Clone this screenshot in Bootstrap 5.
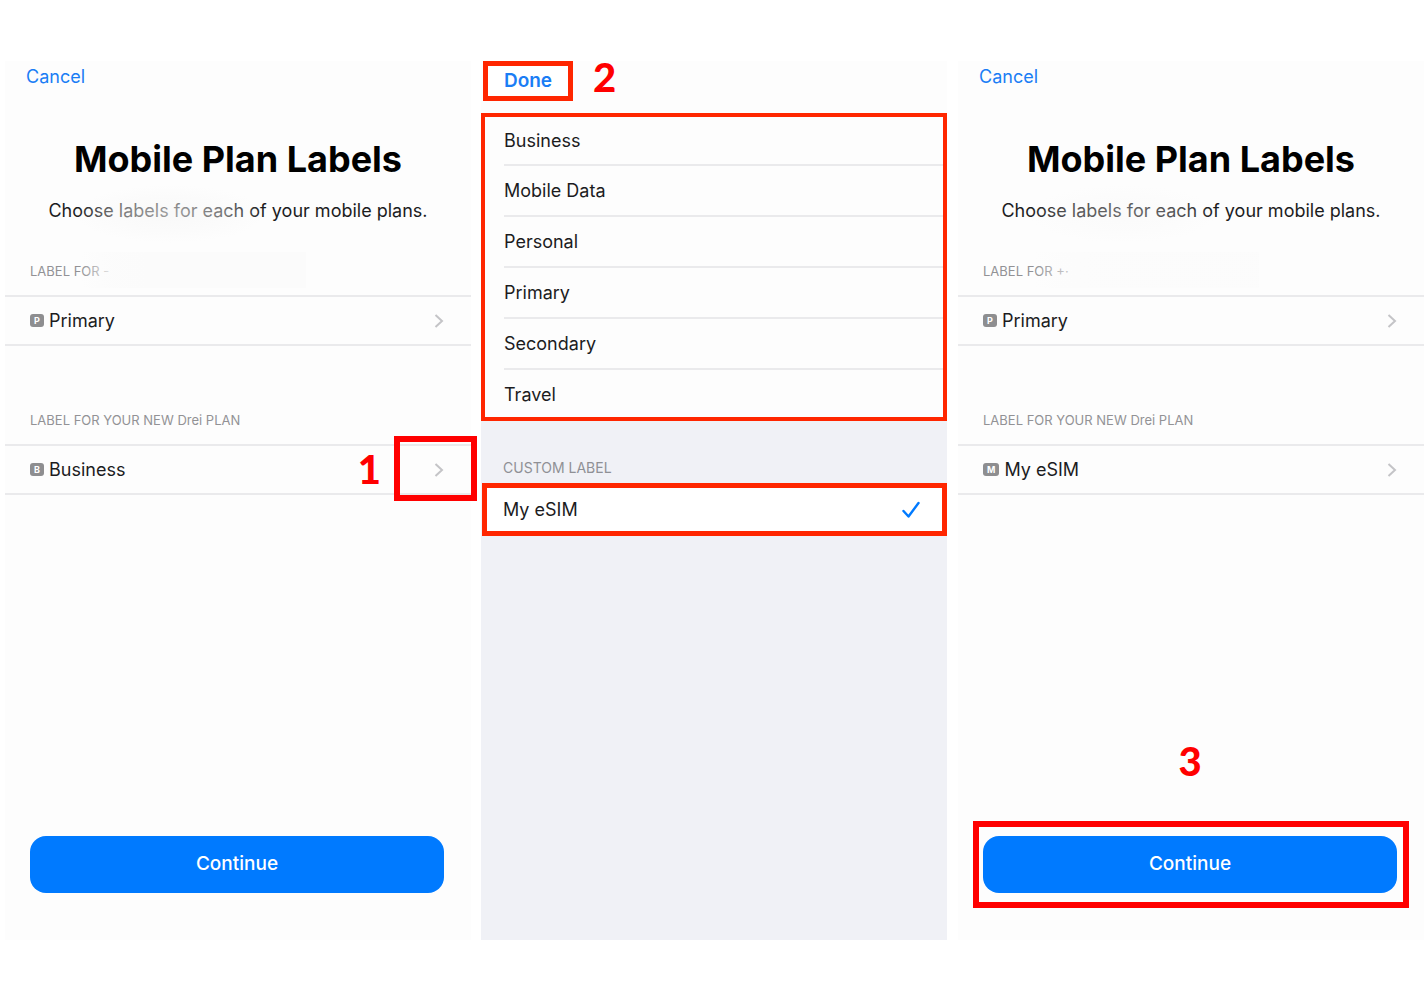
<!DOCTYPE html>
<html lang="en">
<head>
<meta charset="utf-8">
<meta name="viewport" content="width=device-width, initial-scale=1">
<title>Mobile Plan Labels</title>
<link href="https://cdn.jsdelivr.net/npm/bootstrap@5.3.0/dist/css/bootstrap.min.css" rel="stylesheet">
<style>
  body { font-family: Inter, "Liberation Sans", sans-serif; font-size: 18px; line-height: 24px; color: #1c1c1e; background: #fff; }
  .steps { padding: 61px 4px 62px 5px; }
  .phone { flex: 1 1 0; min-width: 0; background: #fdfdfd; }
  .phone-picker { margin: 0 11px 0 10px; background: #f0f1f6; }
  .text-action { color: #1a7df5; text-decoration: none; }
  .cancel-bar { padding: 4px 21px 0; }
  .plan-title { font-size: 36px; line-height: 44px; font-weight: 700; color: #000; margin: 48px 0 18px; }
  .plan-intro { margin: 0; }
  .group-label { font-size: 13px; line-height: 16px; color: #929295; margin: 0; padding: 0 25px; }
  .first-group { margin-top: 40px; }
  .second-group { margin-top: 66px; }
  .plan-row { height: 51px; margin-top: 16px; padding: 0 27px 0 25px; color: #1c1c1e; text-decoration: none; border-top: 2px solid #eaeaec; border-bottom: 2px solid #eaeaec; }
  .plan-tag { min-width: 14px; height: 13px; padding: 0 4px; border-radius: 3px; background: #8e8e90; color: #fff; font-size: 9px; line-height: 13px; font-weight: 700; text-align: center; margin-right: 5px; }
  .continue-btn { height: 57px; border-radius: 16px; background: #007aff; color: #fff; font-size: 19px; font-weight: 500; }
  .continue-btn:hover { background: #006be0; color: #fff; }
  .continue-area { padding: 0 27px 47px 25px; }
  .step-number { font-family: Lato, sans-serif; font-size: 40px; line-height: 32px; font-weight: 900; color: #f00; }
  .ring-1 { top: -10px; right: -6px; width: 83px; height: 65px; border: 6px solid #f00; }
  .number-1 { right: 90px; top: 7px; }
  .ring-3 { inset: -15px -12px -15px -10px; border: 6px solid #f00; pointer-events: none; }
  .number-3 { left: 0; right: 0; top: -91px; }
  .smudge-soft { left: 70px; top: 124px; width: 190px; height: 58px; background: radial-gradient(closest-side, rgba(246,246,246,.6), rgba(248,248,248,.4) 60%, rgba(253,253,253,0)); }
  .smudge-flat { left: 76px; top: 191px; width: 225px; height: 36px; background: linear-gradient(90deg, rgba(251,251,251,0), rgba(251,251,251,.7) 12%, #fbfbfb 30%); }
  .smudge-light { opacity: .6; }
  .picker-bar { height: 52px; background: #fdfdfd; }
  .done-btn { width: 90px; height: 40px; margin-left: 2px; background: #fff; border: 5px solid #ff2600; font-size: 19px; font-weight: 600; }
  .option-list { border: 4px solid #ff2600; border-radius: 0; background: #fdfdfd; padding-left: 19px; }
  .option-row { height: 51px; padding: 0; border: 0; border-bottom: 2px solid #eaeaec; background: transparent; color: #1c1c1e; text-align: left; }
  .option-row:first-child { height: 49px; }
  .option-row:last-child { height: 47px; padding-top: 3px; border-bottom: 0; }
  .custom-label { font-size: 14px; line-height: 18px; color: #8f9095; margin: 38px 0 6px; padding: 0 22px; }
  .custom-row { height: 53px; margin-left: 1px; padding: 0 22px 0 16px; border: 5px solid #ff2600; background: #fff; color: #1c1c1e; }
</style>
</head>
<body>
<main class="steps d-flex min-vh-100">
  <section class="phone d-flex flex-column position-relative">
    <div class="cancel-bar"><a class="text-action" href="#">Cancel</a></div>
    <h1 class="plan-title text-center">Mobile Plan Labels</h1>
    <p class="plan-intro text-center">Choose labels for each of your mobile plans.</p>
    <p class="group-label first-group">LABEL FOR -</p>
    <a class="plan-row d-flex align-items-center" href="#">
      <span class="plan-tag">P</span><span>Primary</span>
      <svg class="ms-auto" width="10" height="16" viewBox="0 0 10 16" fill="none" stroke="#c4c4c7" stroke-width="2" aria-hidden="true"><path d="M1.500 2 8 8 1.500 14"/></svg>
    </a>
    <p class="group-label second-group">LABEL FOR YOUR NEW Drei PLAN</p>
    <a class="plan-row d-flex align-items-center position-relative" href="#">
      <span class="plan-tag">B</span><span>Business</span>
      <svg class="ms-auto" width="10" height="16" viewBox="0 0 10 16" fill="none" stroke="#c4c4c7" stroke-width="2" aria-hidden="true"><path d="M1.500 2 8 8 1.500 14"/></svg>
      <span class="step-number number-1 position-absolute">1</span>
      <span class="ring-1 position-absolute"></span>
    </a>
    <div class="continue-area mt-auto"><button type="button" class="btn continue-btn w-100 border-0">Continue</button></div>
    <span class="smudge-soft position-absolute"></span>
    <span class="smudge-flat position-absolute"></span>
  </section>

  <section class="phone phone-picker">
    <div class="picker-bar d-flex align-items-start">
      <button type="button" class="done-btn text-action p-0">Done</button>
      <span class="step-number ms-3 ps-1">2</span>
    </div>
    <div class="option-list list-group">
      <button type="button" class="option-row">Business</button>
      <button type="button" class="option-row">Mobile Data</button>
      <button type="button" class="option-row">Personal</button>
      <button type="button" class="option-row">Primary</button>
      <button type="button" class="option-row">Secondary</button>
      <button type="button" class="option-row">Travel</button>
    </div>
    <h2 class="custom-label fw-normal">CUSTOM LABEL</h2>
    <div class="d-flex">
      <button type="button" class="custom-row d-flex flex-fill align-items-center justify-content-between">
        <span>My eSIM</span>
        <svg width="18" height="18" viewBox="0 0 18 18" fill="none" stroke="#007aff" stroke-width="2.400" stroke-linecap="round" stroke-linejoin="round" aria-hidden="true"><path d="M1.500 10 6.500 15.500 16.500 2"/></svg>
      </button>
    </div>
  </section>

  <section class="phone d-flex flex-column position-relative">
    <div class="cancel-bar"><a class="text-action" href="#">Cancel</a></div>
    <h1 class="plan-title text-center">Mobile Plan Labels</h1>
    <p class="plan-intro text-center">Choose labels for each of your mobile plans.</p>
    <p class="group-label first-group">LABEL FOR +·</p>
    <a class="plan-row d-flex align-items-center" href="#">
      <span class="plan-tag">P</span><span>Primary</span>
      <svg class="ms-auto" width="10" height="16" viewBox="0 0 10 16" fill="none" stroke="#c4c4c7" stroke-width="2" aria-hidden="true"><path d="M1.500 2 8 8 1.500 14"/></svg>
    </a>
    <p class="group-label second-group">LABEL FOR YOUR NEW Drei PLAN</p>
    <a class="plan-row d-flex align-items-center" href="#">
      <span class="plan-tag">M</span><span>My eSIM</span>
      <svg class="ms-auto" width="10" height="16" viewBox="0 0 10 16" fill="none" stroke="#c4c4c7" stroke-width="2" aria-hidden="true"><path d="M1.500 2 8 8 1.500 14"/></svg>
    </a>
    <div class="continue-area mt-auto">
      <div class="position-relative">
        <button type="button" class="btn continue-btn w-100 border-0">Continue</button>
        <span class="ring-3 position-absolute"></span>
        <span class="step-number number-3 position-absolute text-center">3</span>
      </div>
    </div>
    <span class="smudge-soft smudge-light position-absolute"></span>
    <span class="smudge-flat smudge-light position-absolute"></span>
  </section>
</main>
<script src="https://cdn.jsdelivr.net/npm/bootstrap@5.3.0/dist/js/bootstrap.bundle.min.js"></script>
</body>
</html>
